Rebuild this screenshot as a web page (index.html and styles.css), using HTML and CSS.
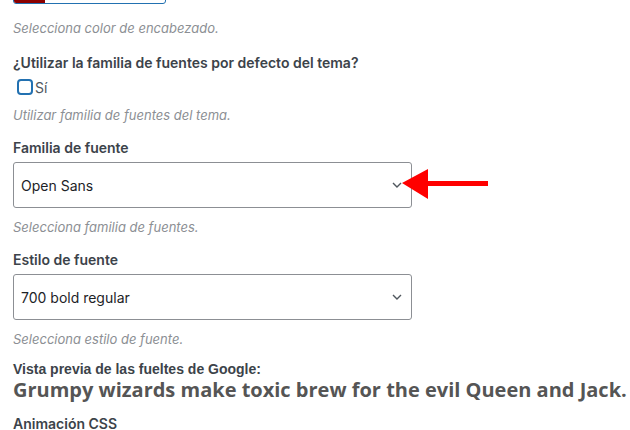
FILE: index.html
```html
<!DOCTYPE html>
<html lang="es">
<head>
    <meta charset="UTF-8">
    <title>Opciones de fuente</title>
    <link rel="stylesheet" href="styles.css">
</head>
<body>
    <div class="panel">
        <div class="field color-field">
            <button class="color-btn"><span class="swatch"></span></button>
            <p class="desc">Selecciona color de encabezado.</p>
        </div>

        <div class="field">
            <label class="title">¿Utilizar la familia de fuentes por defecto del tema?</label>
            <label class="check"><span class="box"></span>Sí</label>
            <p class="desc">Utilizar familia de fuentes del tema.</p>
        </div>

        <div class="field">
            <label class="title">Familia de fuente</label>
            <div class="select-wrap">
                <div class="select">Open Sans
                    <svg class="chev" width="10" height="6" viewBox="0 0 10 6"><path d="M1 1l4 4 4-4" fill="none" stroke="#50575e" stroke-width="1.4"/></svg>
                </div>
                <svg class="arrow" width="87" height="30" viewBox="0 0 87 30"><polygon points="0,14 26,0 26,12 86,12 86,17 26,17 26,30" fill="#f00"/></svg>
            </div>
            <p class="desc">Selecciona familia de fuentes.</p>
        </div>

        <div class="field">
            <label class="title">Estilo de fuente</label>
            <div class="select">700 bold regular
                <svg class="chev" width="10" height="6" viewBox="0 0 10 6"><path d="M1 1l4 4 4-4" fill="none" stroke="#50575e" stroke-width="1.4"/></svg>
            </div>
            <p class="desc">Selecciona estilo de fuente.</p>
        </div>

        <div class="field preview">
            <label class="title">Vista previa de las fueltes de Google:</label>
            <p class="sample">Grumpy wizards make toxic brew for the evil Queen and Jack.</p>
        </div>

        <div class="field">
            <label class="title">Animación CSS</label>
        </div>
    </div>
</body>
</html>
```
FILE: styles.css
```css
body {
    margin: 0;
    background-color: #fff;
    font-family: Inter, "Liberation Sans", sans-serif;
    color: #3c434a;
}
.panel {
    padding: 0 13px;
    margin-top: -19px;
}
.field {
    margin-bottom: 16px;
}
.color-field {
    margin-bottom: 18px;
}
.color-btn {
    display: block;
    width: 153px;
    height: 23px;
    padding: 0;
    border: 1px solid #2271b1;
    border-radius: 3px;
    background-color: #fff;
    overflow: hidden;
}
.swatch {
    display: block;
    width: 31px;
    height: 100%;
    background-color: #8b0000;
}
.desc {
    margin: 16px 0 0;
    font-size: 13px;
    font-style: italic;
    color: #8c8f94;
}
.title {
    display: block;
    font-size: 14px;
    font-weight: 600;
    color: #3c434a;
    line-height: 18px;
}
.check {
    display: flex;
    align-items: center;
    margin: 6px 0 0 4px;
    font-size: 14px;
    color: #50575e;
    height: 18px;
}
.box {
    width: 12px;
    height: 12px;
    border: 2px solid #2271b1;
    border-radius: 4px;
    margin-right: 2px;
}
.field .check + .desc {
    margin-top: 11px;
}
.select-wrap {
    position: relative;
}
.select {
    display: flex;
    align-items: center;
    justify-content: space-between;
    width: 399px;
    height: 46px;
    box-sizing: border-box;
    margin-top: 5px;
    padding: 0 9px 0 7px;
    border: 1px solid #8c8f94;
    border-radius: 3px;
    font-size: 14px;
    color: #1d2327;
}
.select + .desc,
.select-wrap + .desc {
    margin-top: 11px;
}
.arrow {
    position: absolute;
    left: 389px;
    top: 7px;
}
.preview {
    margin-top: -3px;
    margin-bottom: 13px;
}
.preview .title {
    font-family: "Liberation Sans", sans-serif;
}
.sample {
    margin: 0;
    font-family: "Open Sans", sans-serif;
    font-weight: 700;
    font-size: 20px;
    color: #555;
    line-height: 24px;
    white-space: nowrap;
}
```
